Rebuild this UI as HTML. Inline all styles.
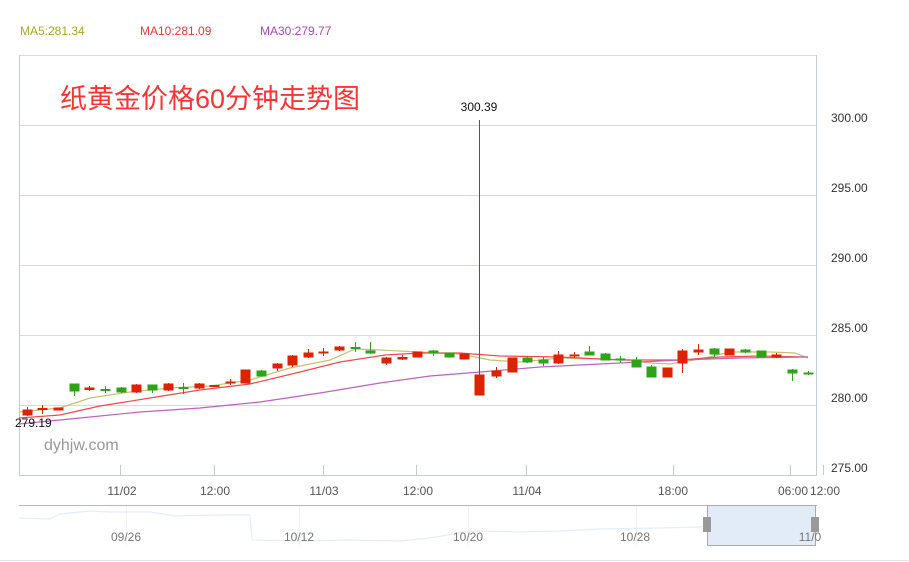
<!DOCTYPE html>
<html><head><meta charset="utf-8"><style>
html,body{margin:0;padding:0;background:#fff;width:909px;height:562px;overflow:hidden}
svg{display:block}
text{font-family:"Liberation Sans","Noto Sans CJK SC",sans-serif}
</style></head><body>
<svg width="909" height="562" xmlns="http://www.w3.org/2000/svg">
<text x="20" y="35" font-size="12" fill="#a8a828">MA5:281.34</text>
<text x="140" y="35" font-size="12" fill="#f03838">MA10:281.09</text>
<text x="260" y="35" font-size="12" fill="#a848b8">MA30:279.77</text>
<g stroke="#d6d9de" stroke-width="1">
<line x1="19" y1="55.5" x2="817" y2="55.5"/>
<line x1="19" y1="125.5" x2="817" y2="125.5"/>
<line x1="19" y1="195.5" x2="817" y2="195.5"/>
<line x1="19" y1="265.5" x2="817" y2="265.5"/>
<line x1="19" y1="335.5" x2="817" y2="335.5"/>
<line x1="19" y1="405.5" x2="817" y2="405.5"/>
</g>
<g stroke="#c4ccd8" stroke-width="1">
<line x1="19.5" y1="55" x2="19.5" y2="475"/>
<line x1="816.5" y1="55" x2="816.5" y2="475"/>
<line x1="19" y1="475.5" x2="817" y2="475.5"/>
<line x1="120.5" y1="465" x2="120.5" y2="475"/>
<line x1="214.5" y1="465" x2="214.5" y2="475"/>
<line x1="323.5" y1="465" x2="323.5" y2="475"/>
<line x1="416.5" y1="465" x2="416.5" y2="475"/>
<line x1="526.5" y1="465" x2="526.5" y2="475"/>
<line x1="673.5" y1="465" x2="673.5" y2="475"/>
<line x1="790.5" y1="465" x2="790.5" y2="475"/>
<line x1="823.5" y1="465" x2="823.5" y2="475"/>
</g>
<g font-size="12" fill="#333">
<text x="831" y="122">300.00</text>
<text x="831" y="192">295.00</text>
<text x="831" y="262">290.00</text>
<text x="831" y="332">285.00</text>
<text x="831" y="402">280.00</text>
<text x="831" y="472">275.00</text>
</g>
<g font-size="12" fill="#555" text-anchor="middle">
<text x="122" y="495">11/02</text>
<text x="215" y="495">12:00</text>
<text x="324" y="495">11/03</text>
<text x="418" y="495">12:00</text>
<text x="527" y="495">11/04</text>
<text x="673" y="495">18:00</text>
<text x="793" y="495">06:00</text>
<text x="825" y="495">12:00</text>
</g>
<text x="60" y="108" font-size="27" fill="#f33">纸黄金价格60分钟走势图</text>
<text x="44" y="450" font-size="16" fill="#999">dyhjw.com</text>
<polyline fill="none" stroke="#c8c070" stroke-width="1.2" points="19,412 60,408 90,398 130,392 170,388 210,386 250,380 290,368 330,360 355,349 380,350 420,352 460,354 490,360 520,362 560,358 600,359 630,360 650,363 670,364 700,359 730,352 770,352 795,353 808,358"/>
<polyline fill="none" stroke="#f24a4a" stroke-width="1.2" points="19,418 60,415 100,406 150,398 200,390 250,384 300,372 340,362 385,355 420,353 460,353 500,356 560,357 620,360 680,360 720,357 760,356 808,357"/>
<polyline fill="none" stroke="#c060c0" stroke-width="1.2" points="19,424 80,418 140,412 200,408 260,402 320,393 380,383 430,376 480,372 540,367 600,364 680,360 740,358 808,357"/>
<g stroke-width="1">
<g fill="#dd2200" stroke="#dd2200">
<line x1="27.5" y1="407" x2="27.5" y2="416"/><rect x="23" y="410" width="9" height="5"/>
<line x1="42.5" y1="405" x2="42.5" y2="414"/><rect x="38" y="408.5" width="9" height="1"/>
<rect x="54" y="408" width="9" height="2"/>
<line x1="89.5" y1="386" x2="89.5" y2="391"/><rect x="85" y="388" width="9" height="1.5"/>
<line x1="136.5" y1="384" x2="136.5" y2="393"/><rect x="132" y="385" width="9" height="7"/>
<line x1="168.5" y1="383" x2="168.5" y2="391"/><rect x="164" y="384" width="9" height="6"/>
<line x1="199.5" y1="383" x2="199.5" y2="389"/><rect x="195" y="384" width="9" height="4"/>
<rect x="210" y="385.5" width="9" height="1"/>
<line x1="230.5" y1="379" x2="230.5" y2="385"/><rect x="226" y="382" width="9" height="1"/>
<rect x="241" y="370" width="9" height="13"/>
<line x1="277.5" y1="363" x2="277.5" y2="371"/><rect x="273" y="364" width="9" height="4"/>
<line x1="292.5" y1="355" x2="292.5" y2="367"/><rect x="288" y="356" width="9" height="9"/>
<line x1="308.5" y1="349" x2="308.5" y2="358"/><rect x="304" y="353" width="9" height="4"/>
<line x1="323.5" y1="348" x2="323.5" y2="356"/><rect x="319" y="352" width="9" height="1"/>
<line x1="339.5" y1="346" x2="339.5" y2="351"/><rect x="335" y="347" width="9" height="3"/>
<line x1="386.5" y1="357" x2="386.5" y2="365"/><rect x="382" y="358" width="9" height="5"/>
<line x1="402.5" y1="355" x2="402.5" y2="360"/><rect x="398" y="357.5" width="9" height="1.5"/>
<rect x="413" y="352" width="9" height="5"/>
<rect x="460" y="354" width="9" height="5"/>
<line x1="479.5" y1="120" x2="479.5" y2="395"/><rect x="475" y="375" width="9" height="20"/>
<line x1="496.5" y1="367" x2="496.5" y2="378"/><rect x="492" y="371" width="9" height="5"/>
<rect x="508" y="358" width="9" height="14"/>
<line x1="558.5" y1="351" x2="558.5" y2="364"/><rect x="554" y="355" width="9" height="8"/>
<line x1="574.5" y1="352" x2="574.5" y2="358"/><rect x="570" y="355" width="9" height="1"/>
<rect x="663" y="368" width="9" height="9"/>
<line x1="682.5" y1="349" x2="682.5" y2="373"/><rect x="678" y="351" width="9" height="12"/>
<line x1="698.5" y1="344" x2="698.5" y2="355"/><rect x="694" y="350" width="9" height="2"/>
<rect x="725" y="349" width="9" height="6"/>
<line x1="776.5" y1="353" x2="776.5" y2="358"/><rect x="772" y="355" width="9" height="2"/>
</g>
<g fill="#2ea319" stroke="#2ea319">
<line x1="74.5" y1="384" x2="74.5" y2="396"/><rect x="70" y="384" width="9" height="7"/>
<line x1="105.5" y1="386" x2="105.5" y2="393"/><rect x="101" y="389.5" width="9" height="1"/>
<line x1="121.5" y1="387" x2="121.5" y2="393"/><rect x="117" y="388" width="9" height="4"/>
<line x1="152.5" y1="385" x2="152.5" y2="393"/><rect x="148" y="385" width="9" height="5"/>
<line x1="183.5" y1="383" x2="183.5" y2="394"/><rect x="179" y="387.5" width="9" height="1"/>
<line x1="261.5" y1="370" x2="261.5" y2="376"/><rect x="257" y="371" width="9" height="5"/>
<line x1="355.5" y1="342" x2="355.5" y2="352"/><rect x="351" y="347.5" width="9" height="1"/>
<line x1="370.5" y1="342" x2="370.5" y2="354"/><rect x="366" y="351" width="9" height="2"/>
<line x1="433.5" y1="350" x2="433.5" y2="356"/><rect x="429" y="351" width="9" height="2"/>
<rect x="445" y="353" width="9" height="4"/>
<line x1="527.5" y1="356" x2="527.5" y2="363"/><rect x="523" y="358" width="9" height="4"/>
<line x1="543.5" y1="357" x2="543.5" y2="366"/><rect x="539" y="360" width="9" height="3"/>
<line x1="589.5" y1="346" x2="589.5" y2="355"/><rect x="585" y="352" width="9" height="3"/>
<line x1="605.5" y1="353" x2="605.5" y2="360"/><rect x="601" y="354" width="9" height="6"/>
<line x1="620.5" y1="356" x2="620.5" y2="363"/><rect x="616" y="359" width="9" height="1"/>
<line x1="636.5" y1="357" x2="636.5" y2="367"/><rect x="632" y="360" width="9" height="7"/>
<line x1="651.5" y1="365" x2="651.5" y2="377"/><rect x="647" y="367" width="9" height="10"/>
<line x1="714.5" y1="348" x2="714.5" y2="357"/><rect x="710" y="349" width="9" height="5"/>
<line x1="745.5" y1="349" x2="745.5" y2="353"/><rect x="741" y="350" width="9" height="2"/>
<rect x="757" y="351" width="9" height="6"/>
<line x1="792.5" y1="369" x2="792.5" y2="381"/><rect x="788" y="370" width="9" height="3"/>
<line x1="808.5" y1="371" x2="808.5" y2="375"/><rect x="804" y="373" width="9" height="1"/>
</g>
</g>
<text x="479" y="111" font-size="12" fill="#111" text-anchor="middle">300.39</text>
<text x="15" y="427" font-size="12" fill="#111">279.19</text>
<line x1="19" y1="505.5" x2="817" y2="505.5" stroke="#b8b8b8"/>
<line x1="0" y1="560.5" x2="909" y2="560.5" stroke="#e4e4e4"/>
<g stroke="#eef1f5"><line x1="126.5" y1="506" x2="126.5" y2="545"/><line x1="299.5" y1="506" x2="299.5" y2="545"/><line x1="468.5" y1="506" x2="468.5" y2="545"/><line x1="636.5" y1="506" x2="636.5" y2="545"/></g>
<polyline fill="none" stroke="#e6edf6" stroke-width="1.2" points="19,518 50,519 60,514 90,511 110,512 150,512 175,516 220,515 250,515 252,540 300,541 350,540 400,541 430,538 470,531 520,532 560,531 600,529 660,528 700,527 710,525 760,519 800,520 815,518"/>
<rect x="707.5" y="505.5" width="108" height="40" fill="#e2ecf8" stroke="#aaa"/>
<rect x="703" y="517" width="8" height="15" fill="#999"/>
<rect x="811" y="517" width="8" height="15" fill="#999"/>
<g font-size="12" fill="#777" text-anchor="middle">
<text x="126" y="541">09/26</text>
<text x="299" y="541">10/12</text>
<text x="468" y="541">10/20</text>
<text x="635" y="541">10/28</text>
<text x="810" y="541">11/0</text>
</g>
</svg>
</body></html>
